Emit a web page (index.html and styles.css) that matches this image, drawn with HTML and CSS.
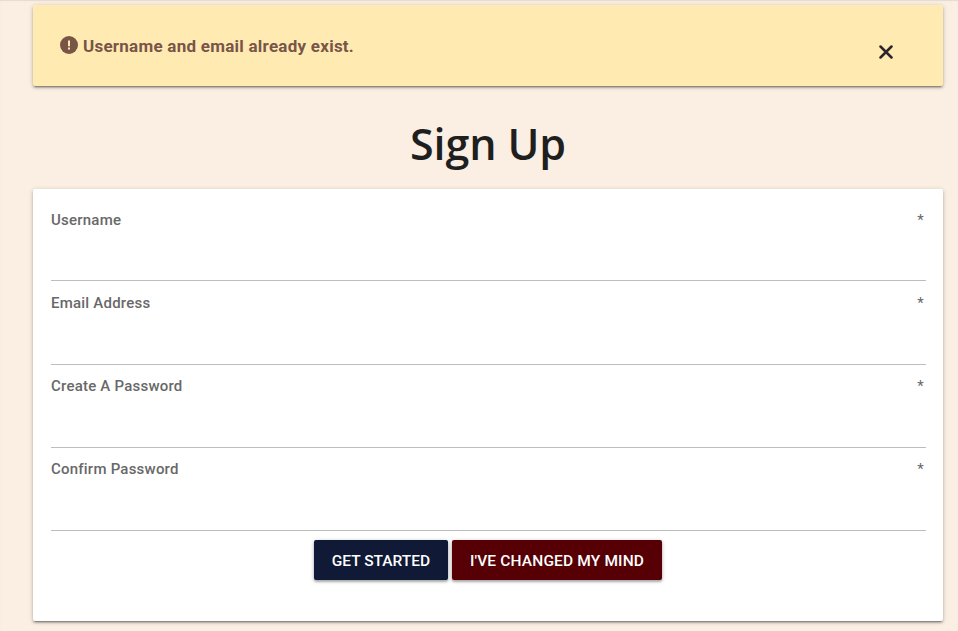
FILE: index.html
```html
<!DOCTYPE html>
<html lang="en">
<head>
<meta charset="utf-8">
<title>Sign Up</title>
<link rel="stylesheet" href="styles.css">
</head>
<body>
<main class="page">
  <div class="alert">
    <svg class="alert-icon" viewBox="0 0 18 18"><circle cx="9" cy="9" r="9"/><path class="mark" d="M8 4.5h2v5.7H8zM8 11.5h2v2H8z"/></svg>
    <span class="alert-text">Username and email already exist.</span>
    <button class="close" aria-label="Close"><svg viewBox="0 0 14 14"><path d="M1.5 1.5l11 11M12.5 1.5l-11 11"/></svg></button>
  </div>
  <h1>Sign Up</h1>
  <form class="card">
    <div class="field"><label>Username</label><i>*</i></div>
    <div class="field"><label>Email Address</label><i>*</i></div>
    <div class="field"><label>Create A Password</label><i>*</i></div>
    <div class="field"><label>Confirm Password</label><i>*</i></div>
    <div class="actions">
      <button type="button" class="btn start">GET STARTED</button>
      <button type="button" class="btn cancel">I'VE CHANGED MY MIND</button>
    </div>
  </form>
</main>
</body>
</html>
```
FILE: styles.css
```css
* { box-sizing: border-box; }
body { margin: 0; min-height: 631px; background: #faefe2; font-family: Roboto, "Liberation Sans", sans-serif; overflow: hidden; box-shadow: inset 0 1px 1px #e6dad0; }
.page { width: 910px; margin-left: 33px; padding-top: 5px; }
.alert, .card { border-radius: 2px; box-shadow: 0 2px 2px rgba(0,0,0,.2), 0 3px 1px -2px rgba(0,0,0,.2), 0 1px 5px rgba(0,0,0,.2); }
.alert { height: 81px; background: #ffebb2; display: flex; padding: 31px 50px 0 27px; color: #795548; }
.alert-icon { width: 18px; height: 18px; fill: #795548; margin-right: 5px; }
.alert-icon .mark { fill: #ffebb2; }
.alert-text { font-size: 17px; font-weight: 700; line-height: 21px; letter-spacing: .25px; white-space: nowrap; }
.close { margin-left: auto; border: 0; background: none; padding: 0; height: 14px; margin-top: 9px; }
.close svg { width: 14px; height: 14px; display: block; stroke: #2c2529; stroke-width: 2.5; stroke-linecap: round; fill: none; }
h1 { margin: 30px 0 0; height: 73px; text-align: center; font: 600 43px/55px "Open Sans", sans-serif; color: #1f1f1f; letter-spacing: -.1px; }
.card { height: 432px; background: #fff; padding: 10px 17px 0 18px; }
.field { height: 83px; border-bottom: 1px solid #bdbdbd; display: flex; justify-content: space-between; padding-top: 12px; font-size: 15px; font-weight: 500; line-height: 18px; color: #686868; letter-spacing: .22px; }
.field:first-child { height: 82px; }
.field:nth-child(2) { height: 84px; padding-top: 13px; }
.field i { font-style: normal; font-weight: 400; padding-right: 2px; }
.actions { display: flex; justify-content: center; gap: 4px; padding: 9px 1px 0 0; }
.btn { height: 40px; border: 0; border-radius: 2px; color: #fff; font: 500 15.5px Roboto, sans-serif; padding: 1px 0 0; white-space: nowrap; box-shadow: 0 2px 2px rgba(0,0,0,.2), 0 1px 4px rgba(0,0,0,.25); }
.start { width: 134px; background: #101935; }
.cancel { width: 210px; background: #560005; letter-spacing: .15px; }
```
